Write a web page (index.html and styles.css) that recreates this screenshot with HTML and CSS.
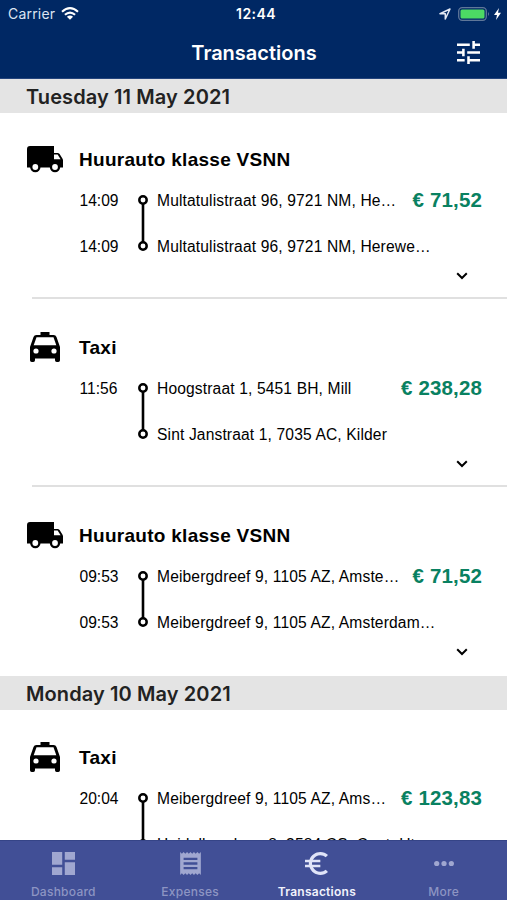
FILE: index.html
```html
<!DOCTYPE html>
<html lang="en">
<head>
<meta charset="utf-8">
<title>Transactions</title>
<link rel="stylesheet" href="styles.css">
</head>
<body>
<svg class="defs" aria-hidden="true">
  <symbol id="truck" viewBox="0 0 36 28">
    <path d="M3 1H27V8H30.5Q31.8 8 32.6 9L35.4 13.4Q36 14.4 36 15.5V22.5H0V4Q0 1 3 1Z"/>
    <path fill="#fff" d="M27 9.4H30.6L33.6 14.3H27Z"/>
    <circle cx="8.3" cy="22" r="5.2"/><circle cx="8.3" cy="22" r="2.9" fill="#fff"/>
    <circle cx="28" cy="22" r="5.2"/><circle cx="28" cy="22" r="2.9" fill="#fff"/>
  </symbol>
  <symbol id="taxi" viewBox="0 0 30 30">
    <path d="M10.5 0H19.5V3H23.6Q25.8 3 26.5 5L30 15V28.3Q30 30 28.3 30H26.7Q25 30 25 28.3V26.5H5V28.3Q5 30 3.300 30H1.700Q0 30 0 28.300V15L3.500 5Q4.200 3 6.400 3H10.500Z"/>
    <path fill="#fff" d="M6.500 5.300H23.500L26.300 13.300H3.700Z"/>
    <circle cx="6" cy="19" r="2.600" fill="#fff"/><circle cx="24" cy="19" r="2.600" fill="#fff"/>
  </symbol>
  <symbol id="route" viewBox="0 0 10 58">
    <path d="M5 10V48" stroke="#000" stroke-width="2.600"/>
    <circle cx="5" cy="6" r="3.700" fill="#fff" stroke="#000" stroke-width="2.500"/>
    <circle cx="5" cy="52" r="3.700" fill="#fff" stroke="#000" stroke-width="2.500"/>
  </symbol>
  <symbol id="chevron" viewBox="0 0 12 8">
    <path d="M1.200 1.300L6 6L10.800 1.300" fill="none" stroke="#000" stroke-width="2"/>
  </symbol>
</svg>
<div class="app">
  <header class="header">
    <div class="status">
      <div class="status-left">
        <span class="carrier">Carrier</span>
        <svg class="wifi" viewBox="0 0 18 13" fill="none" stroke="#fff" stroke-width="2.100">
          <path d="M1 4.700Q9 -2.300 17 4.700M3.900 7.800Q9 3.300 14.100 7.800"/>
          <path fill="#fff" stroke="none" d="M9 12.800L5.900 9.700Q9 7.200 12.100 9.700Z"/>
        </svg>
      </div>
      <span class="clock">12:44</span>
      <div class="status-right">
        <svg class="location" viewBox="0 0 12 12"><path d="M1 5.700L11 1L6.300 11V5.700Z" fill="none" stroke="#e3e9f5" stroke-width="1.500" stroke-linejoin="round"/></svg>
        <svg class="battery" viewBox="0 0 32 14"><rect x=".7" y=".7" width="27.600" height="12.600" rx="3.500" fill="none" stroke="#5f7799" stroke-width="1.300"/><rect x="2.500" y="2.500" width="24" height="9" rx="1.500" fill="#4cd964"/><path d="M30 5Q32 7 30 9Z" fill="#5f7799"/></svg>
        <svg class="bolt" viewBox="0 0 7 12"><path d="M5 0L0 7H3L2 12L7 4.700H4Z" fill="#fff"/></svg>
      </div>
    </div>
    <div class="navbar">
      <h1>Transactions</h1>
      <svg class="filter" viewBox="3 3 18 18" fill="#fff"><path d="M3 17v2h6v-2H3zM3 5v2h10V5H3zm10 16v-2h8v-2h-8v-2h-2v6h2zM7 9v2H3v2h4v2h2V9H7zm14 4v-2H11v2h10zm-6-4h2V7h4V5h-4V3h-2v6z"/></svg>
    </div>
  </header>
  <main class="list">
    <h2 class="day">Tuesday 11 May 2021</h2>
    <article class="trip">
      <div class="trip-title"><span class="vehicle"><svg class="truck"><use href="#truck"/></svg></span><h3>Huurauto klasse VSNN</h3></div>
      <div class="legs">
        <div class="times"><span>14:09</span><span>14:09</span></div>
        <svg class="route"><use href="#route"/></svg>
        <div class="stops">
          <div class="stop"><span>Multatulistraat 96, 9721 NM, He…</span><strong>€ 71,52</strong></div>
          <div class="stop"><span>Multatulistraat 96, 9721 NM, Herewe…</span></div>
        </div>
      </div>
      <svg class="chevron"><use href="#chevron"/></svg>
    </article>
    <article class="trip">
      <div class="trip-title"><span class="vehicle"><svg class="taxi"><use href="#taxi"/></svg></span><h3>Taxi</h3></div>
      <div class="legs">
        <div class="times"><span>11:56</span></div>
        <svg class="route"><use href="#route"/></svg>
        <div class="stops">
          <div class="stop"><span>Hoogstraat 1, 5451 BH, Mill</span><strong>€ 238,28</strong></div>
          <div class="stop"><span>Sint Janstraat 1, 7035 AC, Kilder</span></div>
        </div>
      </div>
      <svg class="chevron"><use href="#chevron"/></svg>
    </article>
    <article class="trip last">
      <div class="trip-title"><span class="vehicle"><svg class="truck"><use href="#truck"/></svg></span><h3>Huurauto klasse VSNN</h3></div>
      <div class="legs">
        <div class="times"><span>09:53</span><span>09:53</span></div>
        <svg class="route"><use href="#route"/></svg>
        <div class="stops">
          <div class="stop"><span>Meibergdreef 9, 1105 AZ, Amste…</span><strong>€ 71,52</strong></div>
          <div class="stop"><span>Meibergdreef 9, 1105 AZ, Amsterdam…</span></div>
        </div>
      </div>
      <svg class="chevron"><use href="#chevron"/></svg>
    </article>
    <h2 class="day">Monday 10 May 2021</h2>
    <article class="trip last partial">
      <div class="trip-title"><span class="vehicle"><svg class="taxi"><use href="#taxi"/></svg></span><h3>Taxi</h3></div>
      <div class="legs">
        <div class="times"><span>20:04</span></div>
        <svg class="route"><use href="#route"/></svg>
        <div class="stops">
          <div class="stop"><span>Meibergdreef 9, 1105 AZ, Ams…</span><strong>€ 123,83</strong></div>
          <div class="stop"><span>Heidelberglaan 8, 3584 CS, Cent. Ut…</span></div>
        </div>
      </div>
    </article>
  </main>
  <nav class="tabs">
    <a class="tab"><svg viewBox="3 3 18 18"><path d="M3 13h8V3H3v10zm0 8h8v-6H3v6zm10 0h8V11h-8v10zm0-18v6h8V3h-8z"/></svg><span>Dashboard</span></a>
    <a class="tab"><svg viewBox="3 2 18 20"><path d="M18 17H6v-2h12v2zm0-4H6v-2h12v2zm0-4H6V7h12v2zM3 22l1.500-1.500L6 22l1.500-1.500L9 22l1.500-1.500L12 22l1.500-1.500L15 22l1.500-1.500L18 22l1.500-1.500L21 22V2l-1.500 1.500L18 2l-1.500 1.500L15 2l-1.500 1.500L12 2l-1.500 1.500L9 2 7.500 3.500 6 2 4.500 3.500 3 2v20z"/></svg><span>Expenses</span></a>
    <a class="tab active"><svg viewBox="3 3 18 18"><path d="M15 18.500c-2.510 0-4.680-1.420-5.760-3.500H15v-2H8.580c-.05-.33-.08-.66-.08-1s.03-.67.080-1H15V9H9.240C10.320 6.920 12.500 5.500 15 5.500c1.610 0 3.090.590 4.230 1.570L21 5.300C19.410 3.870 17.300 3 15 3c-3.920 0-7.240 2.510-8.480 6H3v2h3.060c-.04.330-.06.660-.06 1s.02.670.060 1H3v2h3.520c1.240 3.490 4.560 6 8.480 6 2.310 0 4.410-.870 6-2.300l-1.780-1.770c-1.130.980-2.600 1.570-4.220 1.570z"/></svg><span>Transactions</span></a>
    <a class="tab"><svg viewBox="0 0 22 22"><circle cx="4.500" cy="11" r="2.500"/><circle cx="11.500" cy="11" r="2.500"/><circle cx="18.500" cy="11" r="2.500"/></svg><span>More</span></a>
  </nav>
</div>
</body>
</html>
```

FILE: styles.css
```css
* { box-sizing: border-box; }
body { margin: 0; background: #fff; color: #000; font-family: "Liberation Sans", Arial, sans-serif; }
h1, h2, h3 { margin: 0; }
svg { display: block; flex: none; }
.defs { display: none; }
.app { display: flex; flex-direction: column; height: 900px; overflow: hidden; }

.header { flex: none; height: 79px; background: #002864; color: #fff; font-family: Inter, sans-serif; border-bottom: 1px solid #24447c; }
.status { display: grid; grid-template-columns: 1fr auto 1fr; align-items: center; height: 27px; padding: 0 6px 0 8px; }
.status-left, .status-right { display: flex; align-items: center; }
.status-right { justify-content: flex-end; }
.carrier { font-size: 14px; letter-spacing: .2px; color: #dce4f2; }
.wifi { width: 18px; height: 13px; margin-left: 6px; }
.clock { font-size: 14px; font-weight: 600; letter-spacing: .4px; margin-left: 3px; }
.location { width: 12px; height: 12px; margin-right: 7px; }
.battery { width: 32px; height: 14px; margin-right: 4px; }
.bolt { width: 7px; height: 12px; }
.navbar { display: grid; grid-template-columns: 1fr auto 1fr; align-items: center; height: 51px; padding: 0 27px; }
.navbar h1 { grid-column: 2; font-size: 20px; font-weight: 600; margin-left: 1px; }
.filter { width: 23px; height: 23px; justify-self: end; }

.list { flex: 1; min-height: 0; overflow: hidden; }
.day { height: 34px; padding-left: 26px; background: #e4e4e4; color: #222; font: 600 20px/37px Inter, sans-serif; letter-spacing: .1px; }
.trip { display: flex; flex-direction: column; height: 186px; margin-bottom: 2px; padding-top: 30px; }
.trip::after { content: ""; height: 2px; margin: auto 0 0 32px; background: #e0e0e0; }
.trip.last { height: 187px; margin: 0; }
.trip.last::after { display: none; }
.trip.partial { padding-top: 31px; }
.trip-title { display: flex; align-items: center; height: 32px; }
.vehicle { width: 79px; padding-left: 27px; }
.truck { width: 36px; height: 28px; }
.taxi { width: 30px; height: 30px; margin-left: 3px; }
.trip h3 { font-size: 19px; line-height: 33px; letter-spacing: .28px; }
.legs { display: flex; height: 92px; padding: 2px 25px 0 79.500px; font-size: 15.600px; line-height: 47px; }
.times { display: flex; flex-direction: column; width: 58px; }
.times span { height: 46px; }
.route { width: 10px; height: 58px; margin: 17px 9.500px 0 0; }
.stops { flex: 1; white-space: nowrap; letter-spacing: .14px; }
.stop { display: flex; justify-content: space-between; height: 46px; }
.stop strong { color: #098161; font-size: 20.500px; letter-spacing: .14px; line-height: 46px; }
.chevron { width: 12px; height: 8px; margin: 5px 39px 0 auto; }

.tabs { flex: none; display: grid; grid-template-columns: repeat(4, 1fr); height: 60px; background: #414f96; border-top: 1px solid #354487; }
.tab { display: flex; flex-direction: column; align-items: center; padding-top: 11px; color: #8d95c3; font: 500 12px/15px Inter, sans-serif; letter-spacing: .25px; }
.tab svg { width: 23px; height: 23px; fill: #a0a7d0; margin-bottom: 9px; }
.tab.active { color: #f0f2fc; font-weight: 600; }
.tab.active svg { fill: #e0e4f8; }
```
